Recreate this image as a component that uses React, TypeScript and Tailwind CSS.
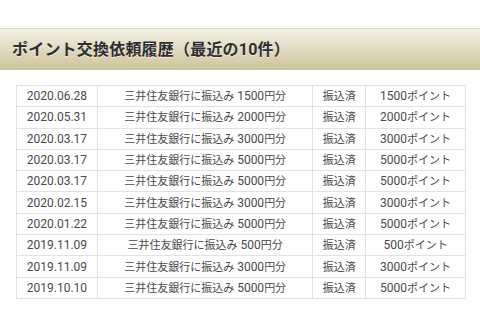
import React from "react";

interface Row {
  date: string;
  amount: string;
  status: string;
  points: string;
}

const rows: Row[] = [
  { date: "2020.06.28", amount: "1500", status: "振込済", points: "1500" },
  { date: "2020.05.31", amount: "2000", status: "振込済", points: "2000" },
  { date: "2020.03.17", amount: "3000", status: "振込済", points: "3000" },
  { date: "2020.03.17", amount: "5000", status: "振込済", points: "5000" },
  { date: "2020.03.17", amount: "5000", status: "振込済", points: "5000" },
  { date: "2020.02.15", amount: "3000", status: "振込済", points: "3000" },
  { date: "2020.01.22", amount: "5000", status: "振込済", points: "5000" },
  { date: "2019.11.09", amount: "500", status: "振込済", points: "500" },
  { date: "2019.11.09", amount: "3000", status: "振込済", points: "3000" },
  { date: "2019.10.10", amount: "5000", status: "振込済", points: "5000" },
];

const cell = "border border-[#e2e2e2] text-center h-[21px] p-0 leading-none";
const jp = "text-[11px]";

const App = () => {
  return (
    <div
      className="w-[480px] h-[318px] bg-white overflow-hidden pt-[28px]"
      style={{ fontFamily: 'Roboto, "Noto Sans CJK JP", sans-serif' }}
    >
      {/* Section header */}
      <div className="h-[42px] border-t border-[#d8d8d8] bg-gradient-to-b from-[#f4f1e6] to-[#cdc39c] flex items-center pl-[12px]">
        <h1 className="text-[16px] font-bold text-[#2e2e2e] tracking-[0.2px] [text-shadow:0_1px_0_rgba(255,255,255,0.6)]">
          ポイント交換依頼履歴（最近の10件）
        </h1>
      </div>

      {/* History table */}
      <div className="pt-[15px] pl-[16px]">
        <table className="border-collapse w-[450px] text-[12px] text-[#4a4a4a]">
          <colgroup>
            <col className="w-[81px]" />
            <col className="w-[216px]" />
            <col className="w-[53px]" />
            <col className="w-[100px]" />
          </colgroup>
          <tbody>
            {rows.map((r, i) => (
              <tr key={i} className="h-[21.3px]">
                <td className={cell}>{r.date}</td>
                <td className={cell}>
                  <span className={jp}>三井住友銀行に振込み</span> {r.amount}
                  <span className={jp}>円分</span>
                </td>
                <td className={cell}>
                  <span className={jp}>{r.status}</span>
                </td>
                <td className={cell}>
                  {r.points}
                  <span className={jp}>ポイント</span>
                </td>
              </tr>
            ))}
          </tbody>
        </table>
      </div>
    </div>
  );
};

export default App;
